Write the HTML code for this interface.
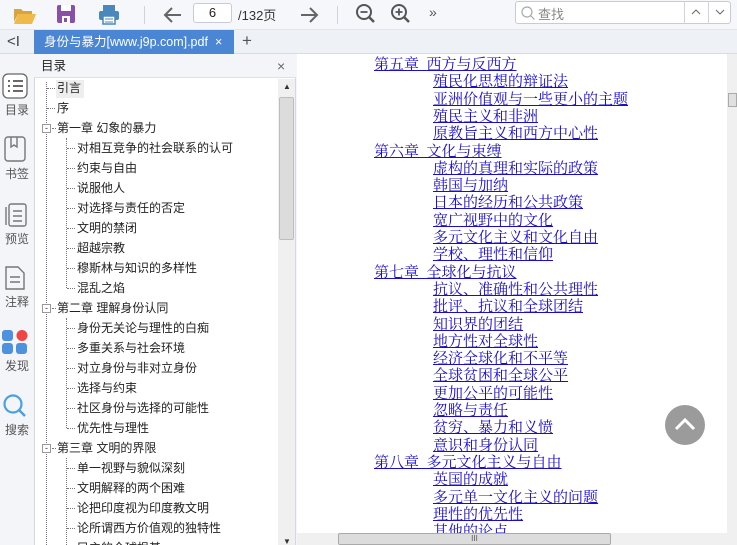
<!DOCTYPE html>
<html><head><meta charset="utf-8"><style>
*{margin:0;padding:0;box-sizing:border-box}
html,body{width:737px;height:545px;overflow:hidden}
body{background:#f3f5f8;font-family:"Liberation Sans","Noto Sans CJK SC",sans-serif;position:relative;font-size:12px;color:#222}
.abs{position:absolute}
#tb{left:0;top:0;width:737px;height:30px;background:#f5f7fa;border-bottom:1px solid #e2e5ea}
#tabs{left:0;top:30px;width:737px;height:24px;background:#eef1f5;border-bottom:1px solid #d8dce2}
#tab{left:34px;top:30px;width:200px;height:24px;background:#4a86d4;color:#fff;font-size:12.5px;line-height:24px;padding-left:10px}
#side{left:0;top:54px;width:34px;height:491px;background:#f3f5f8}
.si{position:absolute;left:0;width:34px;text-align:center;font-size:12px;color:#555}
#toc{left:34px;top:54px;width:262px;height:491px;background:#fff;border-left:1px solid #d5d9de;border-right:1px solid #d5d9de}
#toch{left:34px;top:54px;width:262px;height:24px;background:#f3f5f8;border-bottom:1px solid #dde0e4;font-size:12.5px;line-height:24px;padding-left:7px}
.t{position:absolute;font-size:12px;white-space:nowrap;line-height:16px}
.dot{position:absolute;border-top:1px dotted #777;width:8px}
.vd{position:absolute;border-left:1px dotted #777}
.bx{position:absolute;width:9px;height:9px;border:1px solid #999;background:#fff;font-size:9px;line-height:6px;text-align:center;color:#333}
#cont{left:297px;top:54px;width:430px;height:479px;background:#fff}
.c{position:absolute;font-family:"Liberation Serif","Noto Serif CJK SC",serif;font-size:15px;color:#1a0dcc;text-decoration:underline;white-space:pre;line-height:17px}
</style></head><body>
<div id="tb" class="abs"></div>
<svg class="abs" style="left:12px;top:4px" width="26" height="22"><path d="M2 5h7l2 2h9v3H6L2 18z" fill="#d9a43c"/><path d="M6 10h18l-4 10H2z" fill="#f0b94a"/></svg>
<svg class="abs" style="left:56px;top:4px" width="20" height="20"><rect x="1" y="1" width="18" height="18" rx="2" fill="#8a4fa8"/><rect x="5" y="1" width="10" height="6" fill="#fff"/><rect x="6" y="12" width="8" height="7" fill="#fff"/><rect x="8" y="14" width="3" height="4" fill="#8a4fa8"/></svg>
<svg class="abs" style="left:98px;top:3px" width="22" height="22"><rect x="5" y="2" width="12" height="6" fill="#4a87bd"/><rect x="1" y="8" width="20" height="9" rx="2" fill="#4a87bd"/><rect x="5" y="13" width="12" height="8" fill="#fff" stroke="#4a87bd" stroke-width="1.5"/><line x1="7" y1="16" x2="15" y2="16" stroke="#4a87bd"/><line x1="7" y1="19" x2="15" y2="19" stroke="#4a87bd"/></svg>
<div class="abs" style="left:144px;top:6px;width:1px;height:18px;background:#d0d4da"></div>
<svg class="abs" style="left:162px;top:4px" width="22" height="22"><path d="M19 11H4M10 4l-7 7 7 7" stroke="#666" stroke-width="2" fill="none"/></svg>
<div class="abs" style="left:193px;top:3px;width:39px;height:20px;border:1px solid #c8ccd2;border-radius:3px;background:#fff;text-align:center;line-height:18px;font-size:13px">6</div>
<div class="abs" style="left:238px;top:5px;font-size:13px;color:#333">/132页</div>
<svg class="abs" style="left:298px;top:4px" width="22" height="22"><path d="M3 11h15M12 4l7 7-7 7" stroke="#666" stroke-width="2" fill="none"/></svg>
<div class="abs" style="left:337px;top:6px;width:1px;height:18px;background:#d0d4da"></div>
<svg class="abs" style="left:355px;top:3px" width="22" height="22"><circle cx="9" cy="9" r="7" stroke="#555" stroke-width="2" fill="none"/><path d="M14 14l5 5" stroke="#555" stroke-width="2.5"/><path d="M5.5 9h7" stroke="#555" stroke-width="1.8"/></svg>
<svg class="abs" style="left:390px;top:3px" width="22" height="22"><circle cx="9" cy="9" r="7" stroke="#555" stroke-width="2" fill="none"/><path d="M14 14l5 5" stroke="#555" stroke-width="2.5"/><path d="M5.5 9h7M9 5.5v7" stroke="#555" stroke-width="1.8"/></svg>
<div class="abs" style="left:429px;top:4px;font-size:14px;color:#555">»</div>
<div class="abs" style="left:515px;top:1px;width:216px;height:23px;border:1px solid #c8ccd2;border-radius:3px;background:#fff"></div>
<svg class="abs" style="left:520px;top:5px" width="16" height="16"><circle cx="7" cy="7" r="5" stroke="#aaa" stroke-width="1.2" fill="none"/><path d="M10.5 10.5l4 4" stroke="#aaa" stroke-width="1.2"/></svg>
<div class="abs" style="left:538px;top:4px;font-size:13px;color:#888">查找</div>
<div class="abs" style="left:684px;top:1px;width:1px;height:23px;background:#d0d4da"></div>
<div class="abs" style="left:708px;top:1px;width:1px;height:23px;background:#d0d4da"></div>
<svg class="abs" style="left:690px;top:8px" width="12" height="8"><path d="M2 6l4-4 4 4" stroke="#666" fill="none"/></svg>
<svg class="abs" style="left:714px;top:8px" width="12" height="8"><path d="M2 2l4 4 4-4" stroke="#666" fill="none"/></svg>

<div id="tabs" class="abs"></div>
<div class="abs" style="left:7px;top:33px;font-size:15px;color:#444">&lt;I</div>
<div id="tab" class="abs">身份与暴力[www.j9p.com].pdf<span style="margin-left:7px">×</span></div>
<div class="abs" style="left:242px;top:31px;font-size:17px;color:#555">+</div>

<div id="side" class="abs"></div>
<svg class="abs" style="left:2px;top:73px" width="26" height="26"><rect x="1" y="1" width="24" height="24" rx="5" fill="#fff" stroke="#666" stroke-width="1.3"/><path d="M6 8h2M11 8h10M6 13h2M11 13h10M6 18h2M11 18h10" stroke="#555" stroke-width="1.8"/></svg>
<div class="si" style="top:101px">目录</div>
<svg class="abs" style="left:4px;top:136px" width="22" height="26"><rect x="1" y="1" width="20" height="24" rx="3" fill="none" stroke="#777" stroke-width="1.4"/><path d="M7 1v10l3-2 3 2V1" stroke="#777" stroke-width="1.4" fill="none"/></svg>
<div class="si" style="top:165px">书签</div>
<svg class="abs" style="left:4px;top:201px" width="24" height="26"><rect x="5" y="3" width="17" height="22" rx="2" fill="none" stroke="#777" stroke-width="1.4"/><path d="M2 6v18M9 10h9M9 15h9M9 20h9" stroke="#777" stroke-width="1.4"/></svg>
<div class="si" style="top:230px">预览</div>
<svg class="abs" style="left:4px;top:265px" width="22" height="26"><path d="M2 2h12l6 6v16H2z" fill="none" stroke="#777" stroke-width="1.4"/><path d="M6 12h10M6 17h10" stroke="#777" stroke-width="1.4"/></svg>
<div class="si" style="top:293px">注释</div>
<svg class="abs" style="left:2px;top:329px" width="26" height="26"><rect x="0" y="1" width="11" height="11" rx="3" fill="#4d92e0"/><circle cx="20" cy="6.5" r="5.5" fill="#ef4545"/><rect x="0" y="14" width="11" height="11" rx="3" fill="#4d92e0"/><rect x="14" y="14" width="11" height="11" rx="3" fill="#4d92e0"/></svg>
<div class="si" style="top:357px">发现</div>
<svg class="abs" style="left:2px;top:393px" width="26" height="26"><circle cx="11" cy="11" r="8.5" stroke="#4aa0e0" stroke-width="2.2" fill="none"/><path d="M17 17l6 6" stroke="#4aa0e0" stroke-width="2.5"/></svg>
<div class="si" style="top:421px">搜索</div>

<div id="toc" class="abs"></div>
<div id="toch" class="abs">目录</div>
<div class="abs" style="left:277px;top:58px;font-size:14px;color:#666">×</div>
<div class="abs" style="left:278px;top:79px;width:17px;height:466px;background:#f0f0f0"></div>
<div class="abs" style="left:279px;top:97px;width:15px;height:143px;background:#dcdcdc;border:1px solid #bdbdbd;border-radius:2px"></div>
<div class="abs" style="left:283px;top:82px;font-size:8px;color:#333">▲</div>
<div class="abs" style="left:283px;top:537px;font-size:8px;color:#333">▼</div>
<div class="abs" style="left:56px;top:80px;width:28px;height:18px;background:#eee"></div>
<div class="vd" style="left:46px;top:82px;height:463px"></div>
<div class="vd" style="left:66px;top:138px;height:150px"></div>
<div class="vd" style="left:66px;top:318px;height:110px"></div>
<div class="vd" style="left:66px;top:458px;height:87px"></div>
<div id="tree"></div>

<div id="cont" class="abs"></div>
<div id="cc"></div>
<div class="abs" style="left:727px;top:54px;width:10px;height:479px;background:#f0f0f0"></div>
<div class="abs" style="left:728px;top:93px;width:9px;height:14px;background:#e0e0e0;border:1px solid #aaa"></div>
<div class="abs" style="left:297px;top:533px;width:440px;height:12px;background:#f0f0f0"></div>
<div class="abs" style="left:338px;top:533px;width:273px;height:12px;background:#dcdcdc;border:1px solid #aaa;border-radius:2px;font-size:8px;text-align:center;line-height:10px;color:#555">III</div>
<div class="abs" style="left:665px;top:405px;width:40px;height:40px;border-radius:50%;background:#9b9b9b"></div>
<svg class="abs" style="left:665px;top:405px" width="40" height="40"><path d="M11 24l9-9 9 9" stroke="#fff" stroke-width="3" fill="none"/></svg>

<script>
var T=[[0,"引言"],[0,"序"],[1,"第一章 幻象的暴力"],[2,"对相互竞争的社会联系的认可"],[2,"约束与自由"],[2,"说服他人"],[2,"对选择与责任的否定"],[2,"文明的禁闭"],[2,"超越宗教"],[2,"穆斯林与知识的多样性"],[2,"混乱之焰"],[1,"第二章 理解身份认同"],[2,"身份无关论与理性的白痴"],[2,"多重关系与社会环境"],[2,"对立身份与非对立身份"],[2,"选择与约束"],[2,"社区身份与选择的可能性"],[2,"优先性与理性"],[1,"第三章 文明的界限"],[2,"单一视野与貌似深刻"],[2,"文明解释的两个困难"],[2,"论把印度视为印度教文明"],[2,"论所谓西方价值观的独特性"],[2,"民主的全球根基"]];
var h="";T.forEach(function(e,i){var y=88+i*20;
if(e[0]==0){h+='<div class="dot" style="left:47px;top:'+y+'px"></div><div class="t" style="left:57px;top:'+(y-8)+'px">'+e[1]+'</div>';}
else if(e[0]==1){h+='<div class="bx" style="left:42px;top:'+(y-4)+'px">-</div><div class="dot" style="left:52px;top:'+y+'px;width:4px"></div><div class="t" style="left:57px;top:'+(y-8)+'px">'+e[1]+'</div>';}
else{h+='<div class="dot" style="left:67px;top:'+y+'px"></div><div class="t" style="left:77px;top:'+(y-8)+'px">'+e[1]+'</div>';}});
document.getElementById("tree").innerHTML=h;
var C=[[0,"第五章  西方与反西方"],[1,"殖民化思想的辩证法"],[1,"亚洲价值观与一些更小的主题"],[1,"殖民主义和非洲"],[1,"原教旨主义和西方中心性"],[0,"第六章  文化与束缚"],[1,"虚构的真理和实际的政策"],[1,"韩国与加纳"],[1,"日本的经历和公共政策"],[1,"宽广视野中的文化"],[1,"多元文化主义和文化自由"],[1,"学校、理性和信仰"],[0,"第七章  全球化与抗议"],[1,"抗议、准确性和公共理性"],[1,"批评、抗议和全球团结"],[1,"知识界的团结"],[1,"地方性对全球性"],[1,"经济全球化和不平等"],[1,"全球贫困和全球公平"],[1,"更加公平的可能性"],[1,"忽略与责任"],[1,"贫穷、暴力和义愤"],[1,"意识和身份认同"],[0,"第八章  多元文化主义与自由"],[1,"英国的成就"],[1,"多元单一文化主义的问题"],[1,"理性的优先性"],[1,"其他的论点"]];
h="";C.forEach(function(e,i){var y=57+i*17.3;h+='<div class="c" style="left:'+(e[0]?433:374)+'px;top:'+y.toFixed(1)+'px">'+e[1]+'</div>';});
document.getElementById("cc").innerHTML=h;
</script>
</body></html>
